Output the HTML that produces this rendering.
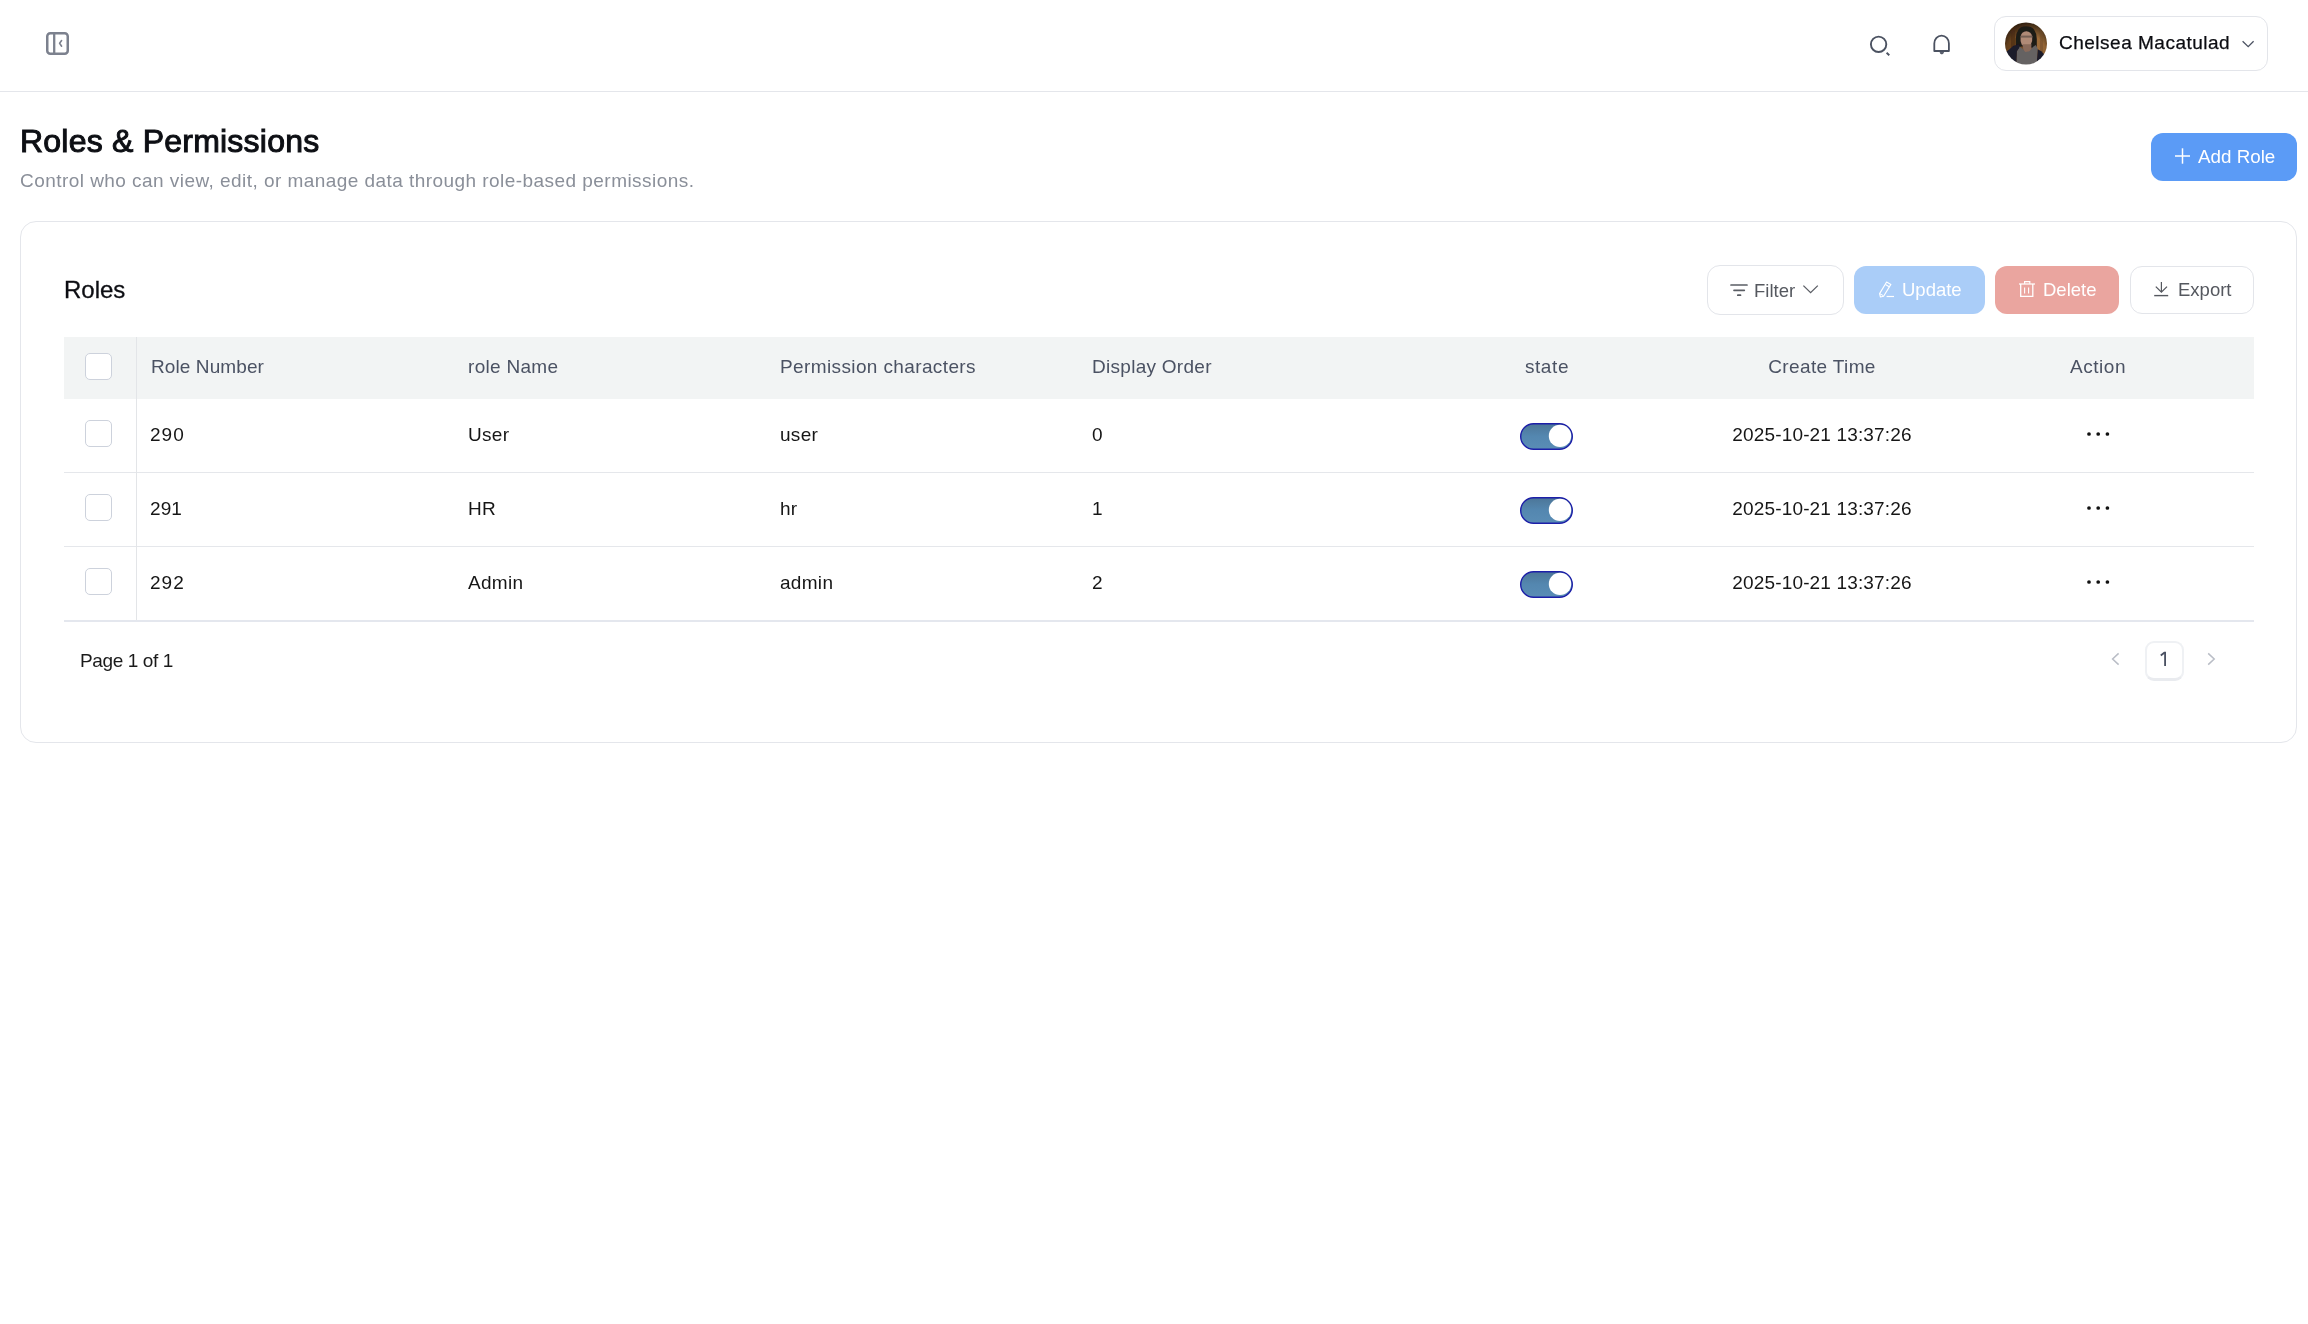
<!DOCTYPE html>
<html>
<head>
<meta charset="utf-8">
<style>
html,body{margin:0;padding:0;background:#fff;width:2308px;height:1324px;overflow:hidden;}
body{position:relative;font-family:"Liberation Sans",sans-serif;color:#161616;}
.a{position:absolute;}
.t{position:absolute;white-space:nowrap;line-height:1;will-change:transform;}
svg{position:absolute;overflow:visible;}
</style>
</head>
<body>
<svg style="left:0;top:0" width="1" height="1"><defs><linearGradient id="tg" x1="0" y1="0" x2="0" y2="1"><stop offset="0" stop-color="#4c7698"/><stop offset="0.5" stop-color="#5487b0"/><stop offset="1" stop-color="#5a8db5"/></linearGradient></defs></svg>
<!-- HEADER -->
<div class="a" style="left:0;top:91px;width:2308px;height:1px;background:#e4e6eb"></div>
<svg style="left:0;top:0" width="1" height="1">
  <!-- sidebar toggle -->
  <rect x="47.25" y="33.25" width="20.5" height="20.5" rx="3" fill="none" stroke="#7c818e" stroke-width="2.5"/>
  <line x1="54.2" y1="33" x2="54.2" y2="54" stroke="#7c818e" stroke-width="2.3"/>
  <polyline points="61.6,40.6 59.6,43.3 61.6,46.2" fill="none" stroke="#7c818e" stroke-width="1.6" stroke-linecap="round" stroke-linejoin="round"/>
  <!-- search -->
  <circle cx="1878.6" cy="44.3" r="7.7" fill="none" stroke="#4b5261" stroke-width="1.9"/>
  <line x1="1886.6" y1="52.8" x2="1889.3" y2="55.2" stroke="#4b5261" stroke-width="1.9"/>
  <!-- bell -->
  <path d="M1934.3 51 V43.5 A7.3 7.9 0 0 1 1948.9 43.5 V51 Z" fill="none" stroke="#4b5261" stroke-width="1.8" stroke-linejoin="round"/>
  <path d="M1940.1 52.2 A1.7 1.7 0 0 0 1943.5 52.2 Z" fill="#4b5261" stroke="#4b5261" stroke-width="0.8"/>
</svg>
<!-- user pill -->
<div class="a" style="left:1994px;top:16px;width:272px;height:53px;border:1px solid #e3e5ea;border-radius:12px;"></div>
<svg style="left:2000px;top:17px" width="52" height="54" viewBox="2000 17 52 54">
  <defs><filter id="blr" x="-10%" y="-10%" width="120%" height="120%"><feGaussianBlur stdDeviation="0.6"/></filter><radialGradient id="vig" cx="0.5" cy="0.75" r="0.75"><stop offset="0.6" stop-color="#000" stop-opacity="0"/><stop offset="1" stop-color="#000" stop-opacity="0.75"/></radialGradient><clipPath id="av"><circle cx="2026" cy="43.5" r="21"/></clipPath>
  <linearGradient id="wood" x1="0" x2="1"><stop offset="0" stop-color="#5e3a1a"/><stop offset="0.45" stop-color="#7a4f26"/><stop offset="0.75" stop-color="#9c6c3a"/><stop offset="1" stop-color="#8a5e30"/></linearGradient></defs>
  <g clip-path="url(#av)"><g filter="url(#blr)">
    <rect x="2002" y="19" width="48" height="49" fill="url(#wood)"/>
    <rect x="2003" y="20" width="46" height="48" fill="url(#vig)"/>
    <rect x="2011" y="26" width="4" height="30" fill="#4a2a10" opacity="0.6"/>
    <rect x="2040" y="28" width="3" height="30" fill="#6b4a2a" opacity="0.5"/>
    <path d="M2018.5 29.5 Q2021 26.3 2026 26.3 Q2031.5 26.3 2034 29.5 Q2036.6 33 2036.8 39 L2036.8 46.5 Q2035.5 49 2032.5 48.8 L2030.5 46.5 L2020.5 46.5 L2019.3 48.8 Q2016.3 49 2015.8 46.5 L2015.8 39 Q2016 33 2018.5 29.5 Z" fill="#1e1a18"/>
    <path d="M2026.3 31.3 Q2031.2 31.5 2032.2 36.5 Q2032.8 41.5 2030.8 44.6 Q2028.8 46.8 2026.3 46.8 Q2023.5 46.8 2021.7 44.4 Q2020 41.5 2020.6 36.5 Q2021.5 31.8 2026.3 31.3 Z" fill="#b08a76"/>
    <path d="M2022.46 44.32 L2031.49 44.32 L2030.80 52.66 L2023.85 53.01 Z" fill="#8a6a5a"/>
    <rect x="2020.5" y="35.6" width="12.5" height="2" fill="#5e4c44" opacity="0.7"/>
    <path d="M2016.20 68 L2016.90 51.27 L2019.33 46.41 L2022.46 48.49 L2025.24 51.97 L2029.41 51.27 L2032.88 47.10 L2035.66 45.02 L2037.75 48.49 L2036.36 68 Z" fill="#656262"/>
    <path d="M2004 68 L2006 52 L2009.25 49.53 L2013.42 45.71 L2019.33 44.32 L2019.33 47.80 L2016.90 51.27 L2016.20 68 Z" fill="#1b1a2a"/>
    <path d="M2036.36 68 L2037.75 49.19 L2041.22 51.27 L2046.43 56.48 L2050 68 Z" fill="#1b1a2a"/>
  </g></g>
</svg>
<div class="t" style="left:2059px;top:32.8px;font-size:19px;letter-spacing:0.5px;color:#0c0d12;-webkit-text-stroke:0.25px #0c0d12">Chelsea Macatulad</div>
<svg style="left:0;top:0" width="1" height="1">
  <polyline points="2242.6,41.2 2248.2,46.6 2253.6,41.2" fill="none" stroke="#4b5262" stroke-width="1.3"/>
</svg>

<!-- TITLE -->
<div class="t" style="left:20px;top:124.8px;font-size:32px;letter-spacing:0.22px;color:#0d0f14;-webkit-text-stroke:1px #0d0f14">Roles &amp; Permissions</div>
<div class="t" style="left:20px;top:171.1px;font-size:19px;letter-spacing:0.45px;color:#8a8f99">Control who can view, edit, or manage data through role-based permissions.</div>
<div class="a" style="left:2151px;top:133px;width:146px;height:48px;border-radius:12px;background:#5b9bf6"></div>
<svg style="left:0;top:0" width="1" height="1">
  <line x1="2175" y1="156" x2="2190" y2="156" stroke="#fff" stroke-width="1.5"/>
  <line x1="2182.5" y1="148.3" x2="2182.5" y2="163.7" stroke="#fff" stroke-width="1.5"/>
</svg>
<div class="t" style="left:2198px;top:147.8px;font-size:18.8px;color:#fff">Add Role</div>

<!-- CARD -->
<div class="a" style="left:20px;top:221px;width:2275px;height:520px;border:1px solid #e4e6eb;border-radius:16px;"></div>
<div class="t" style="left:63.5px;top:277.7px;font-size:24px;color:#0c0d12;-webkit-text-stroke:0.3px #0c0d12">Roles</div>

<!--TOOLBAR-->
<div class="a" style="left:1707px;top:265px;width:135px;height:48px;border:1px solid #e3e5ea;border-radius:13px;"></div>
<svg style="left:0;top:0" width="1" height="1">
  <line x1="1731" y1="285" x2="1747" y2="285" stroke="#5a5d64" stroke-width="1.7" stroke-linecap="round"/>
  <line x1="1734" y1="290.3" x2="1744.3" y2="290.3" stroke="#5a5d64" stroke-width="1.7" stroke-linecap="round"/>
  <line x1="1737.8" y1="295.2" x2="1740.5" y2="295.2" stroke="#5a5d64" stroke-width="1.7" stroke-linecap="round"/>
  <polyline points="1803.4,285.6 1810.6,292.6 1817.8,285.6" fill="none" stroke="#5a5d64" stroke-width="1.3"/>
</svg>
<div class="t" style="left:1753.8px;top:282.1px;font-size:18.5px;color:#55585f">Filter</div>

<div class="a" style="left:1854px;top:266px;width:131px;height:48px;border-radius:12px;background:#aacdf8"></div>
<svg style="left:0;top:0" width="1" height="1">
  <path d="M1886.6 282 L1890.9 284.4 L1883.6 296.2 L1880.4 297 L1879.6 293.6 Z" fill="none" stroke="#fff" stroke-width="1.1" stroke-linejoin="round"/>
  <line x1="1885.4" y1="284.6" x2="1889.6" y2="287" stroke="#fff" stroke-width="1.1"/>
  <line x1="1880" y1="293.8" x2="1883.4" y2="295.7" stroke="#fff" stroke-width="1"/>
  <line x1="1886.6" y1="296.5" x2="1894" y2="296.5" stroke="#fff" stroke-width="1.2"/>
</svg>
<div class="t" style="left:1902.2px;top:281px;font-size:18.5px;color:#fff">Update</div>

<div class="a" style="left:1995px;top:266px;width:124px;height:48px;border-radius:12px;background:#eaa59f"></div>
<svg style="left:0;top:0" width="1" height="1">
  <line x1="2019" y1="284" x2="2035" y2="284" stroke="#fff" stroke-width="1.2"/>
  <path d="M2024.6 283.8 V281.6 H2029.8 V283.8" fill="none" stroke="#fff" stroke-width="1.2"/>
  <path d="M2020.7 284 V296.4 H2032.8 V284" fill="none" stroke="#fff" stroke-width="1.3"/>
  <line x1="2024.6" y1="287.4" x2="2024.6" y2="293.6" stroke="#fff" stroke-width="1.1"/>
  <line x1="2028.6" y1="287.4" x2="2028.6" y2="293.6" stroke="#fff" stroke-width="1.1"/>
</svg>
<div class="t" style="left:2042.9px;top:281px;font-size:18.5px;color:#fff">Delete</div>

<div class="a" style="left:2130px;top:266px;width:122px;height:46px;border:1px solid #e3e5ea;border-radius:12px;"></div>
<svg style="left:0;top:0" width="1" height="1">
  <line x1="2161.4" y1="282" x2="2161.4" y2="292" stroke="#55585f" stroke-width="1.2"/>
  <polyline points="2155.8,286.6 2161.4,292.1 2167,286.6" fill="none" stroke="#55585f" stroke-width="1.3"/>
  <line x1="2154.2" y1="295.6" x2="2168.2" y2="295.6" stroke="#55585f" stroke-width="1.4"/>
</svg>
<div class="t" style="left:2177.9px;top:281px;font-size:18.5px;color:#55585f">Export</div>

<!--TABLE-->
<div class="a" style="left:64px;top:337px;width:2190px;height:62px;background:#f2f4f4"></div>
<div class="a" style="left:64px;top:472px;width:2190px;height:1px;background:#e5e7eb"></div>
<div class="a" style="left:64px;top:546px;width:2190px;height:1px;background:#e5e7eb"></div>
<div class="a" style="left:64px;top:620px;width:2190px;height:2px;background:#e4e7ee"></div>
<div class="a" style="left:136px;top:337px;width:1px;height:283px;background:#e3e5e8"></div>
<div class="a" style="left:85px;top:353px;width:24.5px;height:24.5px;border:1px solid #cdd2dc;border-radius:5px;background:#fff"></div>
<div class="t" style="left:150.7px;top:356.9px;font-size:19px;letter-spacing:0.1px;color:#4b5263">Role Number</div>
<div class="t" style="left:467.7px;top:356.9px;font-size:19px;letter-spacing:0.3px;color:#4b5263">role Name</div>
<div class="t" style="left:779.8px;top:356.9px;font-size:19px;letter-spacing:0.38px;color:#4b5263">Permission characters</div>
<div class="t" style="left:1091.8px;top:356.9px;font-size:19px;letter-spacing:0.28px;color:#4b5263">Display Order</div>
<div class="t" style="left:1396.8px;width:300px;text-align:center;top:356.9px;font-size:19px;letter-spacing:0.6px;color:#4b5263">state</div>
<div class="t" style="left:1672.485px;width:300px;text-align:center;top:356.9px;font-size:19px;letter-spacing:0.37px;color:#4b5263">Create Time</div>
<div class="t" style="left:1948.4699999999998px;width:300px;text-align:center;top:356.9px;font-size:19px;letter-spacing:0.54px;color:#4b5263">Action</div>
<div class="a" style="left:85px;top:420px;width:24.5px;height:24.5px;border:1px solid #cdd2dc;border-radius:5px;background:#fff"></div>
<div class="t" style="left:150.4px;top:424.9px;font-size:19px;letter-spacing:1.0px;color:#161616">290</div>
<div class="t" style="left:468px;top:424.9px;font-size:19px;letter-spacing:0.3px;color:#161616">User</div>
<div class="t" style="left:779.8px;top:424.9px;font-size:19px;letter-spacing:0.3px;color:#161616">user</div>
<div class="t" style="left:1091.8px;top:424.9px;font-size:19px;letter-spacing:0.3px;color:#161616">0</div>
<svg style="left:0;top:0" width="1" height="1"><rect x="1520.7" y="423.7" width="51.6" height="25.6" rx="12.8" fill="url(#tg)" stroke="#1d1fa8" stroke-width="1.4"/><circle cx="1560" cy="435.9" r="11.2" fill="#fff"/></svg>
<div class="t" style="left:1672.275px;width:300px;text-align:center;top:424.9px;font-size:19px;letter-spacing:0.15px;color:#161616">2025-10-21 13:37:26</div>
<svg style="left:0;top:0" width="1" height="1"><circle cx="2089" cy="434" r="1.85" fill="#111"/><circle cx="2098.2" cy="434" r="1.85" fill="#111"/><circle cx="2107.4" cy="434" r="1.85" fill="#111"/></svg>
<div class="a" style="left:85px;top:494px;width:24.5px;height:24.5px;border:1px solid #cdd2dc;border-radius:5px;background:#fff"></div>
<div class="t" style="left:150.4px;top:498.9px;font-size:19px;letter-spacing:0.1px;color:#161616">291</div>
<div class="t" style="left:468px;top:498.9px;font-size:19px;letter-spacing:0.3px;color:#161616">HR</div>
<div class="t" style="left:779.8px;top:498.9px;font-size:19px;letter-spacing:0.3px;color:#161616">hr</div>
<div class="t" style="left:1091.8px;top:498.9px;font-size:19px;letter-spacing:0.3px;color:#161616">1</div>
<svg style="left:0;top:0" width="1" height="1"><rect x="1520.7" y="497.7" width="51.6" height="25.6" rx="12.8" fill="url(#tg)" stroke="#1d1fa8" stroke-width="1.4"/><circle cx="1560" cy="509.9" r="11.2" fill="#fff"/></svg>
<div class="t" style="left:1672.275px;width:300px;text-align:center;top:498.9px;font-size:19px;letter-spacing:0.15px;color:#161616">2025-10-21 13:37:26</div>
<svg style="left:0;top:0" width="1" height="1"><circle cx="2089" cy="508" r="1.85" fill="#111"/><circle cx="2098.2" cy="508" r="1.85" fill="#111"/><circle cx="2107.4" cy="508" r="1.85" fill="#111"/></svg>
<div class="a" style="left:85px;top:568px;width:24.5px;height:24.5px;border:1px solid #cdd2dc;border-radius:5px;background:#fff"></div>
<div class="t" style="left:150.4px;top:572.9px;font-size:19px;letter-spacing:1.0px;color:#161616">292</div>
<div class="t" style="left:468px;top:572.9px;font-size:19px;letter-spacing:0.3px;color:#161616">Admin</div>
<div class="t" style="left:779.8px;top:572.9px;font-size:19px;letter-spacing:0.3px;color:#161616">admin</div>
<div class="t" style="left:1091.8px;top:572.9px;font-size:19px;letter-spacing:0.3px;color:#161616">2</div>
<svg style="left:0;top:0" width="1" height="1"><rect x="1520.7" y="571.7" width="51.6" height="25.6" rx="12.8" fill="url(#tg)" stroke="#1d1fa8" stroke-width="1.4"/><circle cx="1560" cy="583.9" r="11.2" fill="#fff"/></svg>
<div class="t" style="left:1672.275px;width:300px;text-align:center;top:572.9px;font-size:19px;letter-spacing:0.15px;color:#161616">2025-10-21 13:37:26</div>
<svg style="left:0;top:0" width="1" height="1"><circle cx="2089" cy="582" r="1.85" fill="#111"/><circle cx="2098.2" cy="582" r="1.85" fill="#111"/><circle cx="2107.4" cy="582" r="1.85" fill="#111"/></svg>

<!--FOOTER-->
<div class="t" style="left:80px;top:650.8px;font-size:19px;letter-spacing:-0.38px;color:#1a1a1a">Page 1 of 1</div>
<div class="a" style="left:2144.5px;top:641px;width:39.5px;height:40px;box-sizing:border-box;border:2px solid #eff1f4;border-bottom:3px solid #e9ebef;border-radius:9px;background:#fff"></div>
<svg style="left:0;top:0" width="1" height="1"><path d="M2165.1 652.3 V666" stroke="#4a5162" stroke-width="1.85" fill="none"/><path d="M2160.8 655.6 L2164.6 652.6 L2166 652.6" stroke="#4a5162" stroke-width="1.9" fill="none" stroke-linejoin="round"/></svg>
<svg style="left:0;top:0" width="1" height="1"><polyline points="2118.6,653.4 2112.6,659 2118.6,664.6" fill="none" stroke="#b9bdc6" stroke-width="1.5"/><polyline points="2208.2,653.4 2214.2,659 2208.2,664.6" fill="none" stroke="#b9bdc6" stroke-width="1.5"/></svg>

</body>
</html>
